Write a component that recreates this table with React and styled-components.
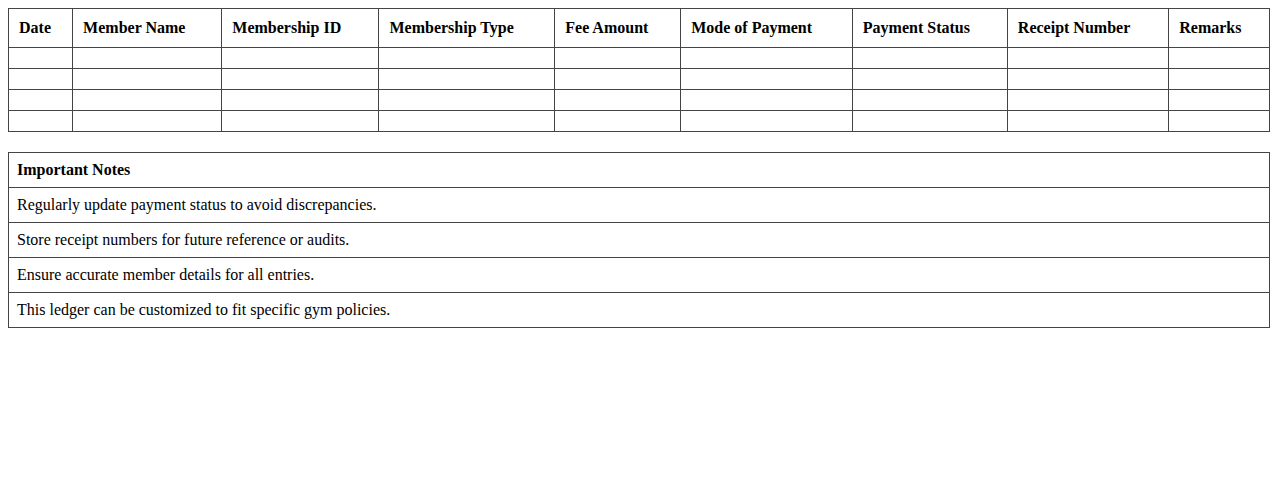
import React from 'react'
import styled, { createGlobalStyle } from 'styled-components'

const GlobalStyle = createGlobalStyle`
body {
    margin: 8px;
    background: #ffffff;
    font-family: "Liberation Serif", "Times New Roman", serif;
    font-size: 16px;
    color: #000000;
}
`

const Table = styled.table`
width: 100%;
border-collapse: collapse;
margin-top: ${({ $gap }) => $gap || 0}px;
`

const HeadCell = styled.th`
border: 1px solid #444;
padding: ${({ $pad }) => $pad}px;
text-align: left;
font-weight: bold;
`

const Cell = styled.td`
border: 1px solid #444;
padding: ${({ $pad }) => $pad}px;
`

const columns = [
  'Date',
  'Member Name',
  'Membership ID',
  'Membership Type',
  'Fee Amount',
  'Mode of Payment',
  'Payment Status',
  'Receipt Number',
  'Remarks',
]

const notes = [
  'Regularly update payment status to avoid discrepancies.',
  'Store receipt numbers for future reference or audits.',
  'Ensure accurate member details for all entries.',
  'This ledger can be customized to fit specific gym policies.',
]

const App = () => {
  return (
    <>
      <GlobalStyle />
      <Table>
        <thead>
          <tr>
            {columns.map((c) => (
              <HeadCell key={c} $pad={10}>{c}</HeadCell>
            ))}
          </tr>
        </thead>
        <tbody>
          {[0, 1, 2, 3].map((r) => (
            <tr key={r}>
              {columns.map((c) => (
                <Cell key={c} $pad={10}></Cell>
              ))}
            </tr>
          ))}
        </tbody>
      </Table>
      <Table $gap={20}>
        <thead>
          <tr>
            <HeadCell $pad={8}>Important Notes</HeadCell>
          </tr>
        </thead>
        <tbody>
          {notes.map((n) => (
            <tr key={n}>
              <Cell $pad={8}>{n}</Cell>
            </tr>
          ))}
        </tbody>
      </Table>
    </>
  )
}

export default App
